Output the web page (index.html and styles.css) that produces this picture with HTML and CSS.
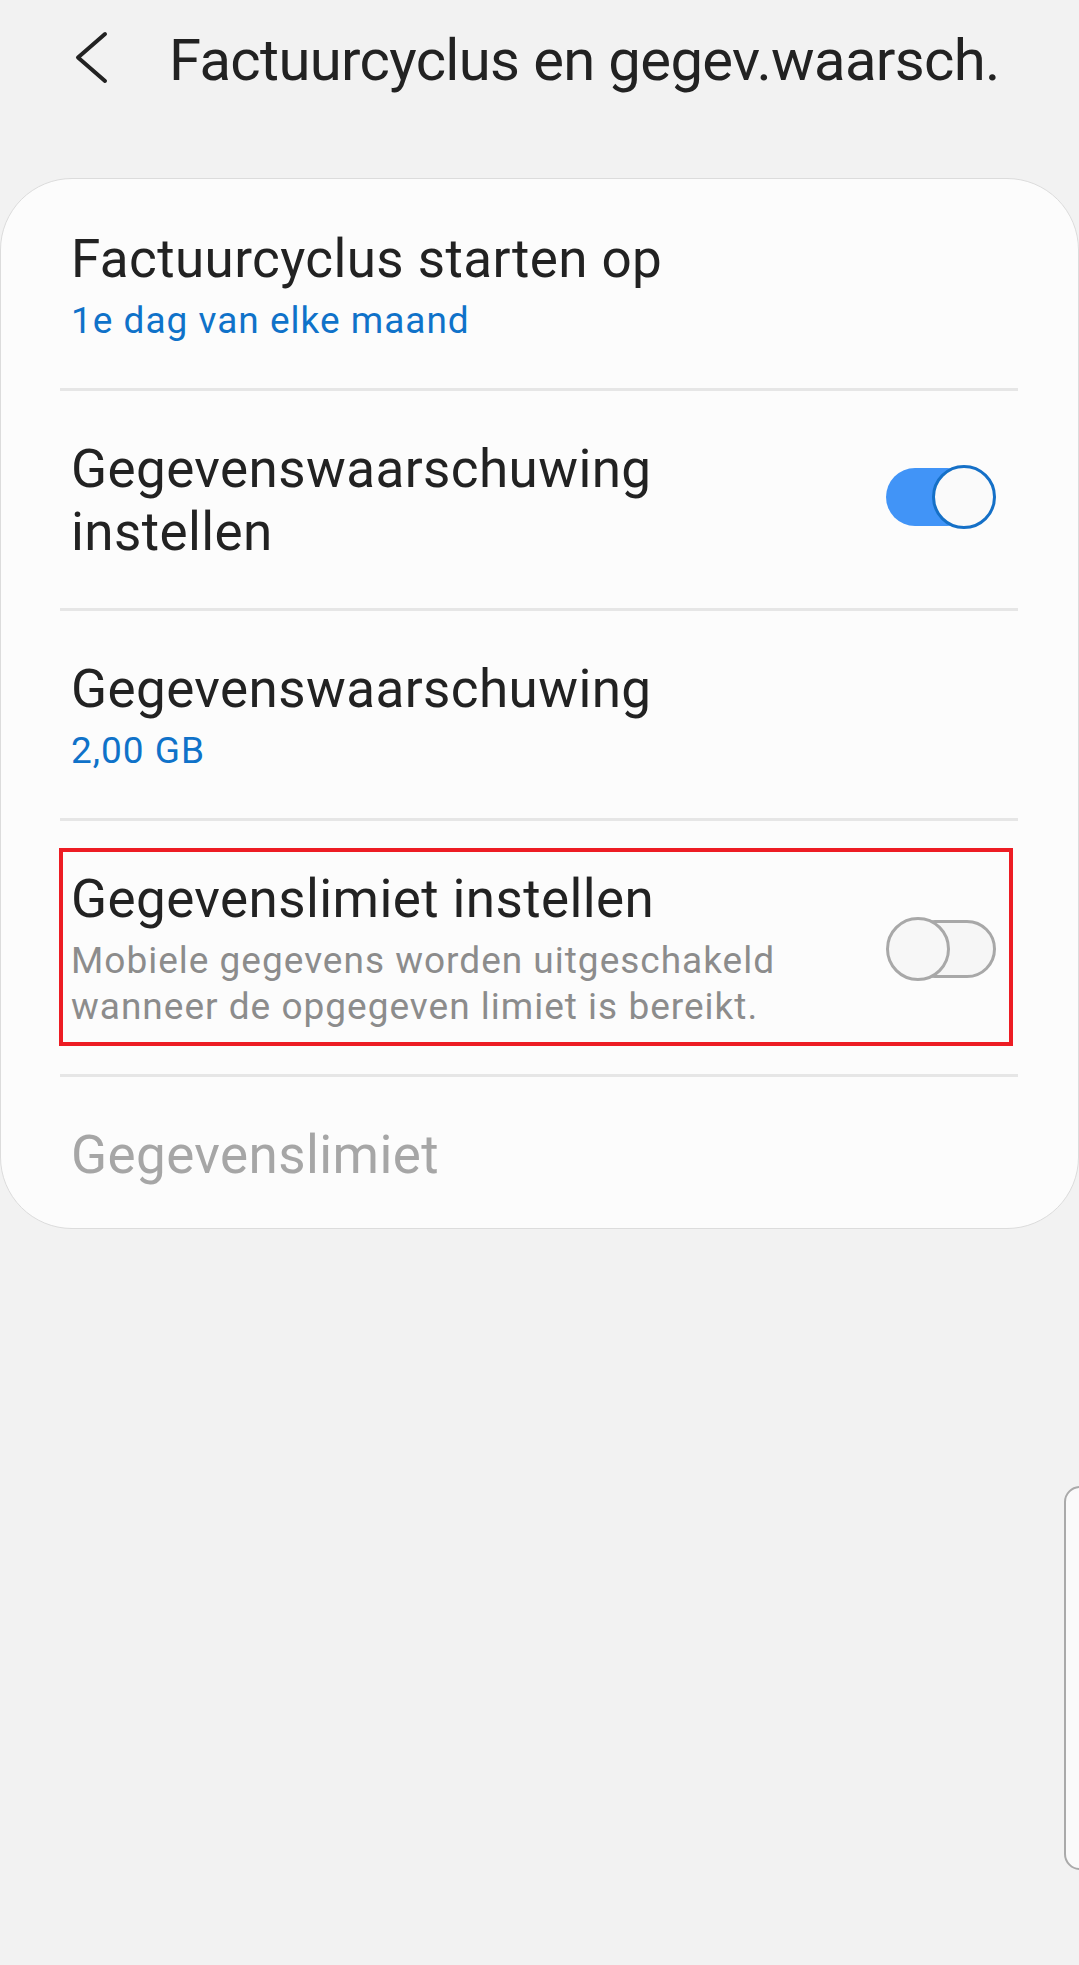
FILE: index.html
```html
<!DOCTYPE html>
<html lang="nl">
<head>
<meta charset="utf-8">
<title>Factuurcyclus en gegev.waarsch.</title>
<link rel="stylesheet" href="styles.css">
</head>
<body>
<div class="screen">
  <header class="appbar">
    <span class="back">
      <svg width="40" height="80" viewBox="0 0 40 80" aria-hidden="true">
        <polyline points="32,14 5,37.5 32,61" fill="none" stroke="#222" stroke-width="4" stroke-linecap="round" stroke-linejoin="round"/>
      </svg>
    </span>
    <h1 class="title">Factuurcyclus en gegev.waarsch.</h1>
  </header>

  <section class="card">
    <div class="item">
      <div class="text">
        <div class="label">Factuurcyclus starten op</div>
        <div class="sub blue">1e dag van elke maand</div>
      </div>
    </div>
    <div class="item">
      <div class="text">
        <div class="label">Gegevenswaarschuwing<br>instellen</div>
      </div>
      <div class="switch on"><span class="track"></span><span class="knob"></span></div>
    </div>
    <div class="item">
      <div class="text">
        <div class="label">Gegevenswaarschuwing</div>
        <div class="sub blue">2,00 GB</div>
      </div>
    </div>
    <div class="item highlighted">
      <div class="text">
        <div class="label">Gegevenslimiet instellen</div>
        <div class="sub gray">Mobiele gegevens worden uitgeschakeld<br>wanneer de opgegeven limiet is bereikt.</div>
      </div>
      <div class="switch off"><span class="track"></span><span class="knob"></span></div>
    </div>
    <div class="item last">
      <div class="text">
        <div class="label disabled">Gegevenslimiet</div>
      </div>
    </div>
  </section>

  <div class="edge-handle"></div>
</div>
</body>
</html>
```

FILE: styles.css
```css
html, body {
  margin: 0;
  padding: 0;
  background: #f2f2f2;
}

body {
  font-family: Roboto, "Noto Sans", "Liberation Sans", sans-serif;
  color: #222;
}

.screen {
  position: relative;
  width: 1079px;
  height: 1965px;
  overflow: hidden;
  background: #f2f2f2;
}

.appbar {
  display: flex;
  align-items: flex-start;
  height: 178px;
  box-sizing: border-box;
  padding: 20px 0 0 73px;
}

.back {
  display: block;
  width: 40px;
  height: 80px;
  margin-right: 56px;
}

.back svg {
  display: block;
}

.title {
  margin: 0;
  font-size: 58px;
  font-weight: 400;
  line-height: 80px;
  color: #222;
  white-space: nowrap;
  letter-spacing: -0.65px;
}

.card {
  background: #fcfcfc;
  border: 1.5px solid #dcdcdc;
  border-radius: 72px;
  box-sizing: border-box;
  width: 1079px;
  height: 1051px;
  padding-top: 2px;
}

.item {
  position: relative;
  display: flex;
  align-items: center;
  margin: 0 60px 0 59px;
  padding: 47px 22px 44px 11px;
  border-bottom: 3px solid #e6e6e6;
}

.item.last {
  border-bottom: none;
}

.text {
  flex: 1;
  min-width: 0;
}

.label {
  font-size: 53px;
  line-height: 63px;
  letter-spacing: 0.4px;
  color: #222;
}

.label.disabled {
  color: #a6a6a6;
}

.sub {
  font-size: 37px;
  line-height: 46px;
  letter-spacing: 1px;
  margin-top: 7px;
}

.sub.blue {
  color: #0f72c9;
}

.sub.gray {
  color: #8c8c8c;
}

.switch {
  position: relative;
  flex-shrink: 0;
  width: 110px;
  height: 66px;
}

.switch.on {
  margin-bottom: 8px;
}

.switch .track {
  position: absolute;
  left: 0;
  top: 4px;
  bottom: 4px;
  border-radius: 29px;
  box-sizing: border-box;
}

.switch .knob {
  position: absolute;
  top: 1px;
  width: 64px;
  height: 64px;
  border-radius: 50%;
  box-sizing: border-box;
}

.switch.on .track {
  right: 20px;
  background: #4194f7;
}

.switch.on .knob {
  right: 0;
  background: #fafafa;
  border: 3.5px solid #1570c7;
}

.switch.off .track {
  left: 20px;
  right: 0;
  background: #f6f6f6;
  border: 3px solid #a8a8a8;
}

.switch.off .knob {
  left: 0;
  background: #f7f7f7;
  border: 3px solid #a8a8a8;
}

.highlighted::after {
  content: "";
  position: absolute;
  top: 27px;
  left: -1px;
  right: 5px;
  bottom: 28px;
  border: 4px solid #ed1c24;
  pointer-events: none;
}

.edge-handle {
  position: absolute;
  left: 1064px;
  top: 1486px;
  width: 40px;
  height: 384px;
  border: 2px solid #aaaaaa;
  border-radius: 16px;
  background: #fafafa;
  box-sizing: border-box;
}
```
